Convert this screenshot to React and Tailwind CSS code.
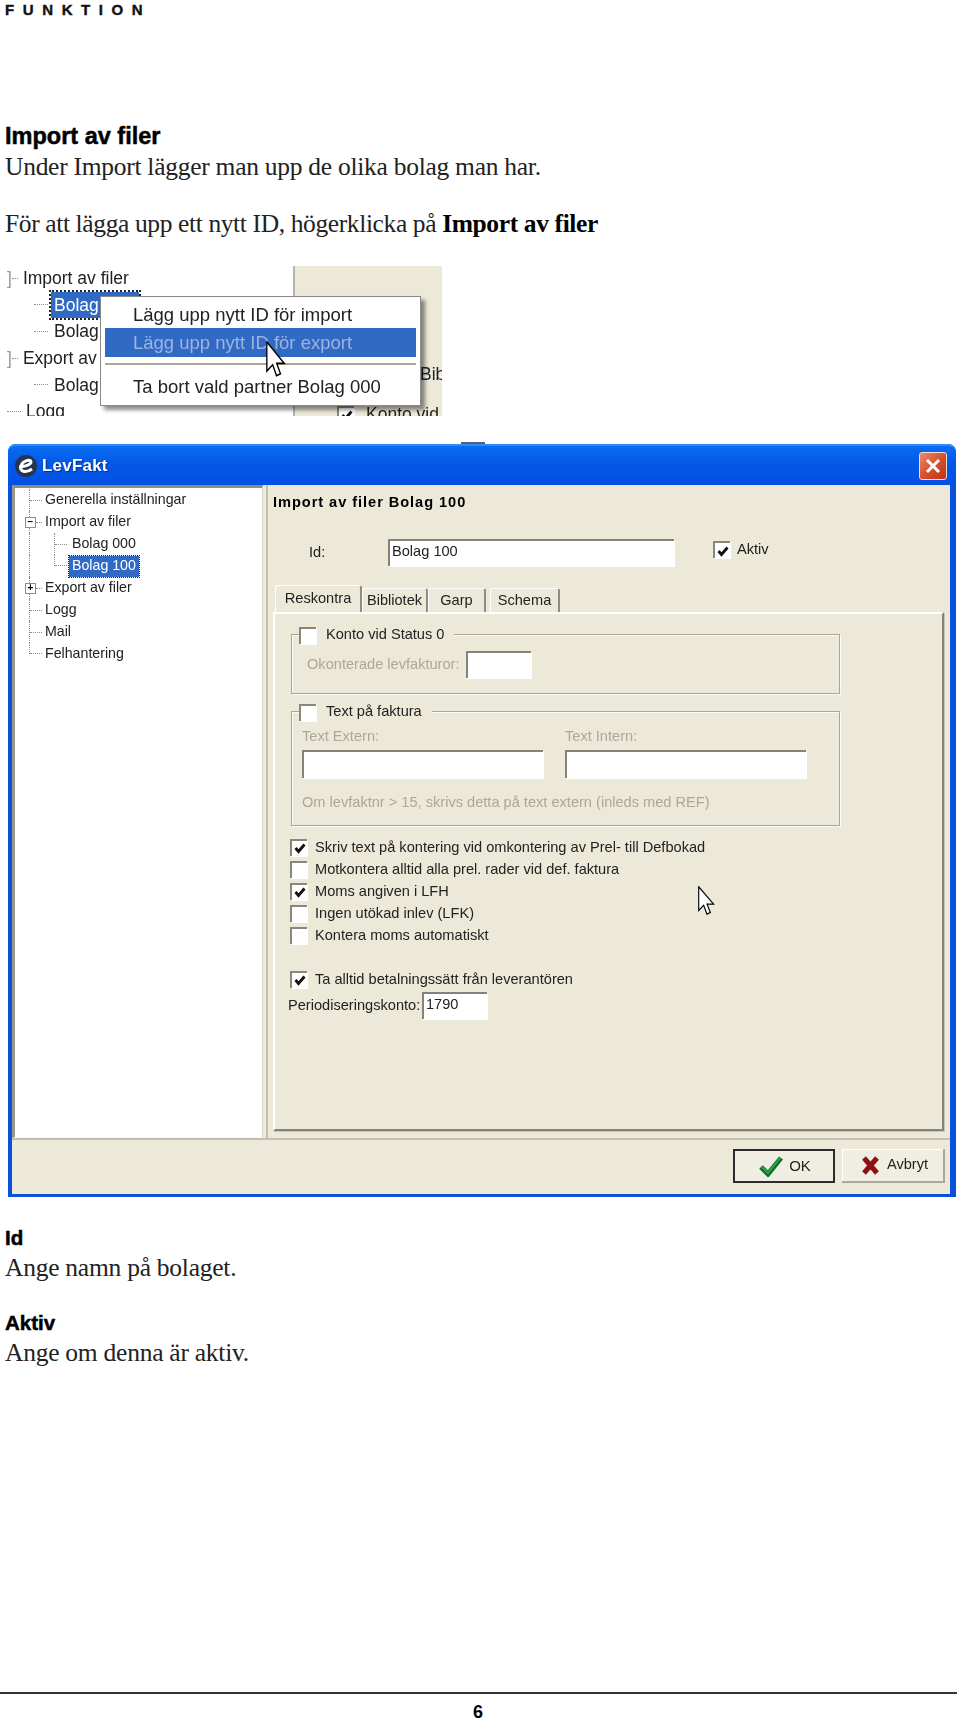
import React from "react";

const SERIF = "font-['Liberation_Serif',serif]";
const SANS = "font-['Liberation_Sans',sans-serif]";

// drawn mouse pointer used on both screenshots
function Cursor({ className }) {
  return (
    <svg className={className} viewBox="0 0 12 19" preserveAspectRatio="none">
      <path d="M0.5 0.5V15.5L4 12.2L6.3 17.8L8.7 16.8L6.4 11.5H11Z" fill="#fff" stroke="#000" strokeWidth="0.8" />
    </svg>
  );
}

function CheckBox({ checked }) {
  return (
    <span className="w-[17px] h-[17px] shrink-0 bg-white border-t-2 border-l-2 border-[#8a877a] flex items-center justify-center shadow-[1px_1px_0_#fff]">
      {checked && (
        <svg width="12" height="12" viewBox="0 0 12 12">
          <path d="M1.5 6L4.5 9.5L10.5 2.5" fill="none" stroke="#111" strokeWidth="2.8" />
        </svg>
      )}
    </span>
  );
}

function Field({ className, children }) {
  return (
    <div className={`bg-white border-t-2 border-l-2 border-[#85827a] shadow-[1px_1px_0_#fff] flex items-center pl-[2px] pb-[3px] text-[#222] ${className}`}>
      {children}
    </div>
  );
}

function CheckRow({ checked, label, className = "" }) {
  return (
    <div className={`h-[22px] -ml-[1px] flex items-center gap-[8px] ${className}`}>
      <span className="mb-[2px]"><CheckBox checked={checked} /></span>
      <span>{label}</span>
    </div>
  );
}

function Group({ className, label, children }) {
  return (
    <div className={`relative w-[549px] border border-[#a9a698] shadow-[1px_1px_0_#fbfaf3,inset_1px_1px_0_#fbfaf3] ${className}`}>
      <div className="absolute -top-[11px] left-[7px] h-[22px] flex items-center gap-[10px] bg-[#ece9d8] pr-[10px]">
        <CheckBox />
        <span>{label}</span>
      </div>
      {children}
    </div>
  );
}

function Connector({ width = "w-[13px]", last }) {
  return (
    <span className={`${width} ${last ? "h-1/2 self-start" : "h-full"} shrink-0 flex ${last ? "items-end" : "items-center"} border-l border-dotted border-[#8d8d8d]`}>
      <span className="w-full border-t border-dotted border-[#8d8d8d]" />
    </span>
  );
}

function ExpandBox({ sign }) {
  return (
    <span className="w-[11px] h-[11px] -ml-[5px] shrink-0 bg-white border border-[#8d8d8d] flex items-center justify-center text-[10px] leading-none text-black font-bold">
      {sign}
    </span>
  );
}

function DialogTree() {
  const row = "h-[22px] flex items-center";
  return (
    <div className="w-[251px] h-full shrink-0 bg-white border-t-[3px] border-l-[3px] border-r border-b border-t-[#8f8c80] border-l-[#9a978b] border-r-[#d8d5c6] border-b-[#f5f4ec] pt-[1px] pl-[14px] text-[14.2px] text-[#222]">
      <div className={row}><Connector /><span className="ml-[3px]">Generella inställningar</span></div>
      <div className={row}><span className="border-l border-dotted border-[#8d8d8d] h-full flex items-center"><ExpandBox sign="−" /><span className="w-[6px] border-t border-dotted border-[#8d8d8d]" /></span><span className="ml-[3px]">Import av filer</span></div>
      <div className={row}><span className="w-[25px] h-full shrink-0 border-l border-dotted border-[#8d8d8d]" /><Connector /><span className="ml-[5px]">Bolag 000</span></div>
      <div className={row}><span className="w-[25px] h-full shrink-0 border-l border-dotted border-[#8d8d8d]" /><Connector last /><span className="ml-[2px] px-[3px] h-[21px] flex items-center bg-[#316ac5] text-white outline-1 outline-dotted outline-[#222]">Bolag 100</span></div>
      <div className={row}><span className="border-l border-dotted border-[#8d8d8d] h-full flex items-center"><ExpandBox sign="+" /><span className="w-[6px] border-t border-dotted border-[#8d8d8d]" /></span><span className="ml-[3px]">Export av filer</span></div>
      <div className={row}><Connector /><span className="ml-[3px]">Logg</span></div>
      <div className={row}><Connector /><span className="ml-[3px]">Mail</span></div>
      <div className={row}><Connector last /><span className="ml-[3px]">Felhantering</span></div>
    </div>
  );
}

function Tab({ label, className }) {
  return (
    <div className={`flex items-center justify-center rounded-t-[3px] border-t border-l border-white border-r-2 border-r-[#8f8c80] bg-[#ece9d8] ${className}`}>
      {label}
    </div>
  );
}

function Dialog() {
  return (
    <div className={`relative ml-[8px] mt-[28px] w-[948px] h-[753px] rounded-t-[8px] bg-[#0a50dc] flex flex-col pb-[3px] blur-[0.35px] ${SANS}`}>
      <div className="absolute -top-[2px] left-[453px] w-[24px] h-[2px] bg-[#51607a]" />
      {/* title bar */}
      <div className="h-[41px] shrink-0 rounded-t-[8px] bg-gradient-to-b from-[#0a6cf0] via-[#0457e6] to-[#0250e8] border-t-2 border-[#2a8cf5] flex items-center pl-[6px] pr-[9px]">
        <svg width="24" height="24" viewBox="0 0 24 24" className="shrink-0">
          <circle cx="12" cy="12" r="11" fill="#27344f" />
          <path d="M5 13C9 13 17 11 17 8C17 5 9 6 7 12C5.500 17 11 20 18 15" fill="none" stroke="#fff" strokeWidth="3" />
        </svg>
        <span className="ml-[4px] text-[17px] font-bold text-white tracking-[0.2px] [text-shadow:1px_1px_1px_#03307f]">LevFakt</span>
        <div className="ml-auto w-[28px] h-[28px] rounded-[3px] border border-[#f3dcd3] bg-gradient-to-br from-[#e88a6b] via-[#d8502c] to-[#b93413] flex items-center justify-center">
          <svg width="18" height="18" viewBox="0 0 18 18">
            <path d="M3 3L15 15M15 3L3 15" stroke="#fff" strokeWidth="3" />
          </svg>
        </div>
      </div>

      {/* dialog body */}
      <div className="flex-1 min-h-0 ml-[4px] mr-[6px] bg-[#ece9d8] flex flex-col text-[14.6px] text-[#222]">
        <div className="h-[653px] shrink-0 flex">
          <DialogTree />
          <div className="ml-[3px] flex-1 border-l-2 border-[#c2bfb0] pl-[5px] pb-[7px] flex flex-col">
            <div className="mt-[8px] h-[20px] flex items-center font-bold tracking-[0.95px] text-black">Import av filer Bolag 100</div>
            <div className="mt-[26px] h-[27px] flex items-center">
              <span className="ml-[36px] w-[79px]">Id:</span>
              <Field className="w-[286px] h-[27px]">Bolag 100</Field>
              <span className="ml-[39px] mb-[6px]"><CheckBox checked /></span>
              <span className="ml-[7px] mb-[6px]">Aktiv</span>
            </div>
            <div className="mt-[19px] h-[27px] flex items-end ml-[2px]">
              <Tab label="Reskontra" className="w-[87px] h-[27px] z-10" />
              <Tab label="Bibliotek" className="w-[66px] h-[24px]" />
              <Tab label="Garp" className="w-[58px] h-[24px]" />
              <Tab label="Schema" className="w-[70px] h-[24px] ml-[4px]" />
            </div>
            <div className="w-[671px] h-[519px] border-t-2 border-l-2 border-t-white border-l-white border-r-2 border-b-2 border-r-[#85827a] border-b-[#85827a] pt-[20px] pl-[16px] shadow-[1px_1px_0_#c9c6b6]">
              <Group className="h-[60px] pt-[16px] pl-[15px]" label="Konto vid Status 0">
                <div className="flex items-center">
                  <span className="text-[#aca899] w-[159px]">Okonterade levfakturor:</span>
                  <Field className="w-[65px] h-[27px]" />
                </div>
              </Group>
              <Group className="h-[115px] mt-[17px] pt-[14px] pl-[10px]" label="Text på faktura">
                <div className="flex gap-[22px] text-[#aca899]">
                  <div className="w-[241px] leading-[20px]">Text Extern:</div>
                  <div className="w-[241px] leading-[20px]">Text Intern:</div>
                </div>
                <div className="mt-[4px] flex gap-[22px]">
                  <Field className="w-[241px] h-[28px]" />
                  <Field className="w-[241px] h-[28px]" />
                </div>
                <div className="mt-[14px] leading-[20px] text-[#aca899]">Om levfaktnr &gt; 15, skrivs detta på text extern (inleds med REF)</div>
              </Group>
              <CheckRow className="mt-[11px]" checked label="Skriv text på kontering vid omkontering av Prel- till Defbokad" />
              <CheckRow label="Motkontera alltid alla prel. rader vid def. faktura" />
              <CheckRow checked label="Moms angiven i LFH" />
              <CheckRow label="Ingen utökad inlev (LFK)" />
              <CheckRow label="Kontera moms automatiskt" />
              <CheckRow className="mt-[22px]" checked label="Ta alltid betalningssätt från leverantören" />
              <div className="-ml-[3px] mt-[1px] h-[27px] flex items-center">
                <span className="w-[134px]">Periodiseringskonto:</span>
                <Field className="w-[65px] h-[27px]">1790</Field>
              </div>
            </div>
          </div>
        </div>

        {/* button row */}
        <div className="flex-1 border-t-2 border-[#c2bfb0] flex justify-end gap-[7px] pr-[5px] pt-[9px]">
          <div className="w-[102px] h-[34px] border-2 border-[#2b2b2b] bg-[#f0eee2] flex items-center justify-center gap-[6px] pl-[2px]">
            <svg width="24" height="22" viewBox="0 0 24 22">
              <path d="M2 12L9 19L22 3" fill="none" stroke="#0b6f27" strokeWidth="5" />
              <path d="M3 12L9 18L21 3" fill="none" stroke="#2fa648" strokeWidth="2" />
            </svg>
            <span className="text-[15px]">OK</span>
          </div>
          <div className="w-[103px] h-[34px] bg-[#f0eee2] border-r-2 border-b-2 border-[#aca899] shadow-[inset_1px_1px_0_#fff] flex items-center justify-center gap-[7px] pl-[4px]">
            <svg width="19" height="21" viewBox="0 0 19 21">
              <path d="M3 3L16 18M16 3L3 18" stroke="#8f0f14" strokeWidth="5" />
            </svg>
            <span>Avbryt</span>
          </div>
        </div>
      </div>
    </div>
  );
}

function ContextShot() {
  const row = "h-[26.6px] flex items-center";
  const dots = "border-t border-dotted border-[#8d8d8d]";
  return (
    <div className={`relative ml-[5px] mt-[27px] w-[437px] h-[150px] overflow-hidden flex text-[17.5px] text-[#222] blur-[0.35px] ${SANS}`}>
      <div className="w-[288px] shrink-0 bg-white pl-[2px]">
        <div className={`${row} -mt-[1px]`}><span className="text-[#999]">]</span><span className={`w-[6px] ${dots}`} /><span className="ml-[5px]">Import av filer</span></div>
        <div className={`${row} pl-[27px]`}><span className={`w-[14px] ${dots}`} /><span className="ml-[3px] w-[88px] h-[26px] bg-[#316ac5] text-white px-[3px] outline-2 outline-dotted outline-[#222]">Bolag 000</span></div>
        <div className={`${row} pl-[27px]`}><span className={`w-[14px] ${dots}`} /><span className="ml-[6px]">Bolag 100</span></div>
        <div className={row}><span className="text-[#999]">]</span><span className={`w-[6px] ${dots}`} /><span className="ml-[5px]">Export av filer</span></div>
        <div className={`${row} pl-[27px]`}><span className={`w-[14px] ${dots}`} /><span className="ml-[6px]">Bolag 000</span></div>
        <div className={row}><span className={`w-[14px] ${dots}`} /><span className="ml-[5px]">Logg</span></div>
      </div>
      <div className="flex-1 bg-[#ece9d8] border-l-2 border-[#b8b5a6] pl-[44px] pt-[110px]">
        <div className="border-t border-white" />
        <div className="absolute left-[415px] top-[95px]">Bibliotek</div>
        <div className="absolute left-[332px] top-[135px] flex items-center gap-[12px]"><CheckBox checked /><span>Konto vid</span></div>
      </div>
      {/* context menu */}
      <div className="absolute left-[95px] top-[30px] w-[321px] h-[110px] bg-white border border-[#8a8a8a] shadow-[4px_4px_4px_rgba(0,0,0,0.45)] px-[4px] pt-[4px] text-[18.5px]">
        <div className="h-[27px] flex items-center pl-[28px]">Lägg upp nytt ID för import</div>
        <div className="h-[29px] bg-[#316ac5] text-[#9db4dc] flex items-center pl-[28px]">Lägg upp nytt ID för export</div>
        <div className="mt-[6px] border-t-2 border-[#aca899]" />
        <div className="mt-[8px] h-[27px] flex items-center pl-[28px]">Ta bort vald partner Bolag 000</div>
      </div>
      <Cursor className="absolute left-[261px] top-[75px] w-[20px] h-[37px]" />
    </div>
  );
}

export default function App() {
  const heading = `${SANS} font-bold text-black [-webkit-text-stroke:0.5px_#000]`;
  const body = `${SERIF} text-[25.5px] text-[#222]`;
  return (
    <div className="relative w-[960px] h-[1721px] bg-white overflow-hidden">
      <div className={`ml-[5px] pt-[3px] h-[15px] leading-[13px] text-[15px] font-bold tracking-[8.6px] text-[#111] ${SANS} [-webkit-text-stroke:0.4px_#111]`}>FUNKTION</div>

      <div className={`ml-[5px] mt-[108px] h-[26px] leading-[26px] text-[23.5px] ${heading}`}>Import av filer</div>
      <div className={`ml-[5px] mt-[3px] h-[30px] leading-[30px] tracking-[-0.27px] ${body}`}>Under Import lägger man upp de olika bolag man har.</div>
      <div className={`ml-[5px] mt-[27px] h-[30px] leading-[30px] tracking-[-0.38px] ${body}`}>För att lägga upp ett nytt ID, högerklicka på <b className="text-black">Import av filer</b></div>

      <ContextShot />
      <Dialog />

      <div className={`ml-[5px] mt-[31px] h-[20px] leading-[20px] text-[20.5px] ${heading}`}>Id</div>
      <div className={`ml-[5px] mt-[5px] h-[30px] leading-[30px] tracking-[-0.25px] ${body}`}>Ange namn på bolaget.</div>
      <div className={`ml-[5px] mt-[30px] h-[20px] leading-[20px] text-[20.5px] ${heading}`}>Aktiv</div>
      <div className={`ml-[5px] mt-[5px] h-[30px] leading-[30px] tracking-[-0.25px] ${body}`}>Ange om denna är aktiv.</div>

      <div className="mt-[324px] w-[957px] border-t-2 border-[#333]" />
      <div className={`mt-[9px] ml-[473px] leading-[18px] text-[18px] font-bold text-black ${SANS}`}>6</div>

      <Cursor className="absolute left-[698px] top-[886px] w-[17px] h-[30px]" />
    </div>
  );
}
